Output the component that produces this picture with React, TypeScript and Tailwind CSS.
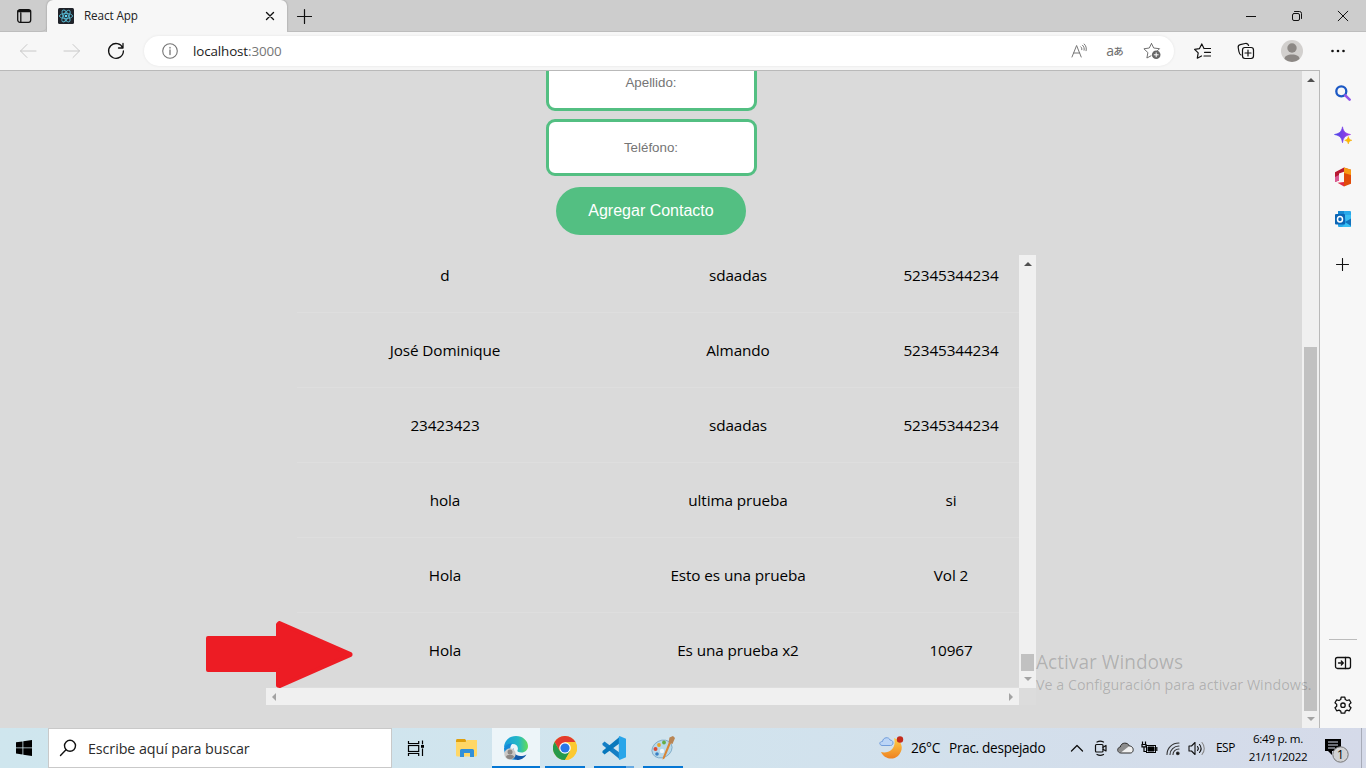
import React from "react";

type Kids = { children?: React.ReactNode };

function Line({ w = 16, sw = 1, color = "#111", children, vb }: Kids & { w?: number; sw?: number; color?: string; vb?: string }) {
  return (
    <svg width={w} height={w} viewBox={vb ?? `0 0 ${w} ${w}`} fill="none" stroke={color} strokeWidth={sw} strokeLinecap="round" strokeLinejoin="round" className="block shrink-0">
      {children}
    </svg>
  );
}

function TitleBar() {
  return (
    <div className="flex h-8 shrink-0 bg-[#cdcdcd]">
      <div className="flex w-[47px] items-center justify-center rounded-br-md border-b border-[#bdbdbd] pl-px">
        <Line sw={1.3}>
          <rect x="1.700" y="1.700" width="13" height="12.600" rx="2.200" />
          <path d="M2 3.500h12.500M2 2.700h12.500M4.800 5v9" />
        </Line>
      </div>
      <div className="flex w-60 items-center rounded-t-md bg-[#f7f7f7] pl-[11px] pr-[10px] shadow-[0_0_2px_rgba(0,0,0,0.35)]">
        <svg width="16" height="16" viewBox="0 0 16 16" className="block">
          <rect width="16" height="16" rx="1.500" fill="#20232a" />
          <g fill="none" stroke="#56b6ce" strokeWidth="0.900">
            <ellipse cx="8" cy="8" rx="6.600" ry="2.600" />
            <ellipse cx="8" cy="8" rx="6.600" ry="2.600" transform="rotate(60 8 8)" />
            <ellipse cx="8" cy="8" rx="6.600" ry="2.600" transform="rotate(120 8 8)" />
          </g>
          <circle cx="8" cy="8" r="1.300" fill="#61dafb" />
        </svg>
        <span className="ml-[10px] text-[11.7px] tracking-[-0.1px] text-[#222]">React App</span>
        <div className="ml-auto flex w-4 justify-center pl-[2px]">
          <Line w={14} sw={1.4}><path d="M3.500 3.500l7 7M10.500 3.500l-7 7" /></Line>
        </div>
      </div>
      <div className="flex flex-1 items-center border-b border-[#bdbdbd] pl-[9px]">
        <Line sw={1.2}><path d="M8.500 1.500v14M1.500 8.500h14" /></Line>
        <div className="ml-auto flex">
          <div className="flex w-[46px] justify-center"><Line w={12}><path d="M1 6.500h10" strokeLinecap="butt" /></Line></div>
          <div className="flex w-[46px] justify-center">
            <Line w={12}><rect x="1.500" y="3.500" width="7" height="7" rx="1.500" /><path d="M3.500 1.500h5a2 2 0 0 1 2 2v5" /></Line>
          </div>
          <div className="flex w-[46px] justify-center"><Line w={12}><path d="M1.200 1.200l9.600 9.600M10.800 1.200L1.200 10.800" /></Line></div>
        </div>
      </div>
    </div>
  );
}

function Toolbar() {
  return (
    <div className="flex h-[38px] shrink-0 items-center bg-[#f7f7f7] pl-[6px]">
      <div className="flex w-11 justify-center"><Line w={18} color="#c8c8c8"><path d="M17 9H1.500M8 2.500L1.500 9 8 15.500" /></Line></div>
      <div className="flex w-11 justify-center"><Line w={18} color="#c8c8c8"><path d="M1 9h15.500M10 2.500L16.500 9 10 15.500" /></Line></div>
      <div className="flex w-11 justify-center">
        <Line w={18} sw={1.3}><path d="M15.800 6A7.400 7.400 0 1 0 16.400 9M16 1.500V6h-4.500" /></Line>
      </div>
      <div className="ml-[6px] flex h-[30px] w-[1030px] items-center rounded-full bg-white pl-[18px] shadow-[0_0_3px_rgba(0,0,0,0.08)]">
        <Line color="#757575" sw={1.1}><circle cx="8" cy="8" r="7.300" /><path d="M8 7v4.500M8 4.300v.7" strokeWidth="1.300" /></Line>
        <span className="ml-[15px] pt-px text-[13.4px] tracking-[-0.12px] text-[#1b1b1b]">localhost<span className="text-[#767676]">:3000</span></span>
        <div className="ml-auto flex items-center text-[#717171]">
          <div className="flex w-9 justify-center">
            <Line color="#777"><path d="M1 14L5.600 2.500l4.600 11.500M2.600 10H8.700M9.800 3.800c.9.700 1.200 1.800 1 2.900M11.500 2.200c1.500 1.200 2 3.200 1.600 5M13.200 1c1.900 1.700 2.500 4.300 1.900 6.700" /></Line>
          </div>
          <div className="flex w-9 items-center justify-center leading-none">
            <span className="text-[14px]">a</span><span className="-ml-px font-['Noto_Sans_CJK_JP'] text-[10.5px] font-medium">あ</span>
          </div>
          <div className="flex w-[38px] justify-center">
            <Line w={18} color="#717171">
              <path d="M8.500 1.500L10.700 6l5.800.7-2 2M8.500 1.500L6.300 6 .9 6.800l4 3.800-1 5.400L8 13.800" /><circle cx="13.200" cy="12.800" r="4.300" fill="#666" stroke="none" /><path d="M13.200 10.800v4M11.200 12.800h4" stroke="#fff" />
            </Line>
          </div>
          <div className="w-[3px]" />
        </div>
      </div>
      <div className="ml-[6px] flex w-11 justify-center">
        <Line w={17} sw={1.2}><path d="M10 5.500h6.500M10 5.500L7.800.9 5.500 5.600.6 6.300l3.600 3.600-.9 5.300L7.500 13M10.500 9.300h6M10 13h6.500" /></Line>
      </div>
      <div className="flex w-11 justify-center">
        <Line w={18} sw={1.2}>
          <path d="M4 13C2.600 12.400 2.200 11 1.900 9.500L1.200 5.500C1 4 1.700 3 3.200 2.700l5-1.200C10 1.200 11.200 2 11.600 3.500" /><rect x="5.500" y="5.500" width="11" height="11" rx="2.400" /><path d="M11 8v6M8 11h6" />
        </Line>
      </div>
      <div className="flex w-[47px] justify-center">
        <svg width="22" height="22" viewBox="0 0 22 22" className="block"><circle cx="11" cy="11" r="11" fill="#d2d0ce" /><circle cx="11" cy="8" r="4.700" fill="#8c8885" /><path d="M3.500 19c0-3 3-4.600 7.500-4.600s7.500 1.600 7.500 4.600a11 11 0 0 1-15 0z" fill="#8c8885" /></svg>
      </div>
      <div className="flex w-[46px] justify-center">
        <svg width="16" height="4" className="block" fill="#111"><circle cx="2.500" cy="2" r="1.300" /><circle cx="8" cy="2" r="1.300" /><circle cx="13.500" cy="2" r="1.300" /></svg>
      </div>
    </div>
  );
}

const contacts = [
  ["d", "sdaadas", "52345344234"],
  ["José Dominique", "Almando", "52345344234"],
  ["23423423", "sdaadas", "52345344234"],
  ["hola", "ultima prueba", "si"],
  ["Hola", "Esto es una prueba", "Vol 2"],
  ["Hola", "Es una prueba x2", "10967"],
];

function Tri({ dir, color = "#a3a3a3" }: { dir: "up" | "down" | "left" | "right"; color?: string }) {
  const d = { up: "M0 6h8L4 2z", down: "M0 2h8L4 6z", left: "M6 0v8L2 4z", right: "M2 0v8l4-4z" }[dir];
  return <svg width="8" height="8" viewBox="0 0 8 8" fill={color} className="block shrink-0"><path d={d} /></svg>;
}

function ContactTable() {
  return (
    <div className="ml-[266px] mt-5 flex h-[450px] w-[770px] flex-col">
      <div className="flex h-[433px]">
        <div className="flex flex-1 flex-col justify-end overflow-hidden pl-[31px]">
          {contacts.map((c, i) => (
            <div key={i} className="grid h-[75px] shrink-0 grid-cols-[296px_290px_136px] items-center border-b border-[#dedede] text-center text-[15.3px] tracking-[-0.1px] text-black">
              {c.map((v, j) => <span key={j} className="whitespace-nowrap">{v}</span>)}
            </div>
          ))}
        </div>
        <div className="flex w-[17px] flex-col items-center bg-[#f0f0f0] pb-[5px] pt-[5px]">
          <Tri dir="up" color="#505050" />
          <div className="mb-1 mt-auto h-[17px] w-[13px] bg-[#c1c1c1]" />
          <Tri dir="down" />
        </div>
      </div>
      <div className="flex h-[17px]">
        <div className="flex w-[753px] items-center justify-between bg-[#f0f0f0] px-1"><Tri dir="left" /><Tri dir="right" /></div>
        <div className="flex-1 bg-[#dcdcdc]" />
      </div>
    </div>
  );
}

function Page() {
  return (
    <main className="relative flex flex-1 flex-col overflow-hidden border-t border-[#b9b9b9] bg-[#dadada]">
      <div className="flex w-[1302px] flex-col items-center font-['Liberation_Sans',sans-serif]">
        <div className="-mt-[17px] flex h-[57px] w-[211px] items-center justify-center rounded-[9px] border-[3px] border-[#53bf82] bg-white text-[13.333px] text-[#757575]">Apellido:</div>
        <div className="mt-2 flex h-[57px] w-[211px] items-center justify-center rounded-[9px] border-[3px] border-[#53bf82] bg-white text-[13.333px] text-[#757575]">Teléfono:</div>
        <div className="mt-[11px] flex h-12 w-[190px] items-center justify-center rounded-full bg-[#53bf82] text-[16px] text-white">Agregar Contacto</div>
      </div>
      <ContactTable />
      <svg className="absolute left-[206px] top-[550px]" width="147" height="68" viewBox="0 0 147 68">
        <path d="M2 17H72V3.500L73.500 2 144.500 33v1L74 65l-2-.5V49H2z" fill="#ed1c24" stroke="#ed1c24" strokeWidth="4" strokeLinejoin="round" />
      </svg>
    </main>
  );
}

function PageScroll() {
  return (
    <div className="flex w-[18px] flex-col items-center border-r border-t border-[#b9b9b9] bg-[#f0f0f0] pb-[5px] pt-[5px]">
      <Tri dir="up" color="#505050" />
      <div className="mb-1 mt-auto h-[364px] w-[13px] bg-[#c1c1c1]" />
      <Tri dir="down" color="#a3a3a3" />
    </div>
  );
}

function SideBar() {
  const cell = "flex h-[42px] w-full items-center justify-center";
  return (
    <aside className="flex w-[46px] flex-col items-center bg-[#f7f7f7] pt-[2px]">
      <div className={cell}>
        <svg width="16" height="16" viewBox="0 0 16 16" fill="none"><circle cx="6.300" cy="6.300" r="5" stroke="#1b58c4" strokeWidth="2.300" /><path d="M10.300 10.300l4.300 4.300" stroke="#9153e8" strokeWidth="2.600" strokeLinecap="round" /></svg>
      </div>
      <div className={cell}>
        <svg width="18" height="18" viewBox="0 0 18 18"><defs><linearGradient id="spark"><stop stopColor="#4a45e8" /><stop offset="1" stopColor="#a33be5" /></linearGradient></defs><path d="M8.500.8c1 4.800 2.500 6.500 8 7.700-5.500 1.200-7 2.900-8 8.200-1-5.300-2.500-7-8-8.200C6 7.300 7.500 5.600 8.500.8z" fill="url(#spark)" stroke="url(#spark)" strokeWidth=".7" strokeLinejoin="round" /><path d="M14.300 10.500c.6 2.400 1.200 3.200 3.600 3.800-2.400.6-3 1.400-3.600 3.700-.6-2.300-1.200-3.100-3.600-3.700 2.400-.6 3-1.400 3.600-3.800z" fill="#ffb900" stroke="#f5a900" strokeWidth=".5" /></svg>
      </div>
      <div className={cell}>
        <svg width="18" height="20" viewBox="0 0 18 20"><path d="M10 .5l7 2.300v14L10 19.500z" fill="#e04b09" /><path d="M10 .5l7 2.300V8L10 6z" fill="#f89b13" /><path d="M10 .5v4.300L5 6.500v7L1 15V5.300z" fill="#b71932" /><path d="M1 10v5l4-1.500V8z" fill="#db5a95" /><path d="M3.500 15.800L10 15v4.500z" fill="#e32b47" /></svg>
      </div>
      <div className={cell}>
        <svg width="18" height="18" viewBox="0 0 18 18"><rect x="4" y="1" width="13" height="16" rx="1" fill="#28a8ea" /><path d="M4 1h6v4H4z" fill="#1688d2" /><path d="M10 5h7v6l-4 2z" fill="#39bdf2" /><path d="M8 17h9V9l-5 4z" fill="#38c0f4" /><path d="M11 12l6 4V8.500z" fill="#1272bd" /><rect x="1" y="4" width="10" height="10.500" rx="1" fill="#0b65b5" /><ellipse cx="6" cy="9.200" rx="2.500" ry="2.800" fill="none" stroke="#fff" strokeWidth="1.500" /></svg>
      </div>
      <div className="mt-1 flex h-[42px] items-center"><Line w={14} sw={1.1}><path d="M6.500.5v12M.5 6.500h12" /></Line></div>
      <div className="mb-[2px] mt-auto h-px w-7 bg-[#bcbcbc]" />
      <div className={cell}>
        <Line w={18} sw={1.3}><rect x="1.500" y="3.500" width="15" height="11" rx="2" /><path d="M11.500 3.500v11M4.500 9h4.500M7.300 7l2 2-2 2" /></Line>
      </div>
      <div className={cell}>
        <Line w={18} sw={1.3}><path d="M7.200 1.200h3.600l.5 2.300 1.700 1 2.300-.7 1.700 3L15.300 8.400v1.800l1.700 1.600-1.700 3-2.300-.7-1.700 1-.5 2.100H7.200l-.5-2.100-1.700-1-2.300.7-1.700-3 1.700-1.600V8.400L1 6.800l1.700-3 2.300.7 1.700-1z" /><circle cx="9" cy="9.200" r="2.200" /></Line>
      </div>
      <div className="h-[2px]" />
    </aside>
  );
}

function TaskBar() {
  return (
    <footer className="flex h-10 shrink-0 bg-linear-to-r from-[#cfe6ee] via-[#d1e4ee] to-[#d5dae9] text-black">
      <div className="flex w-12 items-center justify-center">
        <svg width="16" height="16" viewBox="0 0 16 16"><path d="M0 2.300l6.500-.9v6.100H0zM7.300 1.300L16 0v7.500H7.300zM0 8.300h6.500v6.200L0 13.600zM7.300 8.300H16V16l-8.700-1.300z" /></svg>
      </div>
      <div className="flex w-[344px] items-center border border-[#c9c9c9] bg-white pl-[10px]">
        <Line w={18} sw={1.4}><circle cx="11" cy="6.800" r="5.500" /><path d="M7 10.800L1.500 16.500" /></Line>
        <span className="ml-[11px] pt-px text-[14.3px] tracking-[-0.08px] text-[#2b2b2b]">Escribe aquí para buscar</span>
      </div>
      <div className="flex w-12 items-center justify-center">
        <svg width="18" height="18" viewBox="0 0 18 18" fill="none" stroke="#000" strokeWidth="1.200"><path d="M1.500 2v2.500h10.200V2M1.500 17v-2.500h10.200V17" /><rect x="1.500" y="6.500" width="10.200" height="6" /><path d="M15.500 1.500v3.800M15.500 9.500V17" /><path d="M14 6h3v2.800h-3z" fill="#000" stroke="none" /></svg>
      </div>
      <div className="flex w-[52px] items-center justify-center pl-[2px]">
        <svg width="22" height="20" viewBox="0 0 22 20"><path d="M0 2.500Q0 1 1 1h8l1.500 2V6H0z" fill="#e0a00d" /><path d="M0 4h9.500l1.500-2h10v15q0 1.500-1.500 1.500h-18Q0 18.500 0 17z" fill="#ffd766" /><path d="M4 19v-6.500q0-1.500 1.500-1.500h11q1.500 0 1.500 1.500V19h-4v-4H8v4z" fill="#3190d9" /></svg>
      </div>
      <div className="flex w-12 flex-col items-center justify-between bg-[#edf5f9] pt-2">
        <svg width="24" height="24" viewBox="0 0 24 24"><defs><linearGradient id="eg"><stop stopColor="#199ddd" /><stop offset=".6" stopColor="#24b9c4" /><stop offset="1" stopColor="#63dd55" /></linearGradient></defs><path d="M0 12C0 5 5 0 12 0s12 5 12 10c0 4-3 6.500-6.500 6.500-3 0-4.500-1-4-2.200 1.300-3-.5-6.300-5-6.300C4 8 1 10 0 12z" fill="url(#eg)" /><path d="M0 12c2-4 5-5 8.500-4.500C5 10 5 20 12.500 23.500 5 25 0 19 0 12z" fill="#1389d8" /><path d="M9.500 12c-1 4 2 8 7 8 2.500 0 4-.7 6-1.600C20.500 22 16.500 24 13 24c-5-1-7-8-3.500-12z" fill="#135aaa" /><circle cx="6" cy="18" r="5.700" fill="#cbc9c7" /><circle cx="6" cy="16" r="2.500" fill="#8b8784" /><path d="M2 21c0-3 8-3 8 0-2 3-6 3-8 0z" fill="#8b8784" /></svg>
        <div className="h-[2px] w-12 bg-[#0577d4]" />
      </div>
      <div className="flex w-[50px] flex-col items-center justify-between pt-2">
        <svg width="24" height="24" viewBox="0 0 24 24"><circle cx="12" cy="12" r="12" fill="#fcc931" /><path d="M1.600 6A12 12 0 0 1 22.400 6H12L6.800 15z" fill="#e33b2e" /><path d="M1.600 6A12 12 0 0 0 12 24l5.200-9H6.800z" fill="#269a4b" /><path d="M22.400 6A12 12 0 0 1 12 24l5.200-9L14 6z" fill="#fcc931" /><circle cx="12" cy="12" r="5.800" fill="#fff" /><circle cx="12" cy="12" r="4.600" fill="#2877e8" /></svg>
        <div className="h-[2px] w-10 bg-[#0577d4]" />
      </div>
      <div className="flex w-12 flex-col items-center justify-between pt-2">
        <svg width="24" height="24" viewBox="0 0 24 24"><path d="M.5 7.500l2-2L18 17v6.500L.5 9z" fill="#147fc5" /><path d="M18 .5V7L2.500 18.500l-2-2V15z" fill="#0878bc" /><path d="M17.500 0L24 2.800v18.400L17.500 24l-.7-1V1z" fill="#29a5e9" /></svg>
        <div className="flex h-[2px] w-10 bg-[#0577d4]"><div className="ml-auto w-2 bg-[#65a9e2]" /></div>
      </div>
      <div className="flex w-[50px] flex-col items-center justify-between pt-2">
        <svg width="24" height="24" viewBox="0 0 24 24"><ellipse cx="11" cy="13" rx="10.500" ry="8.500" transform="rotate(-28 11 13)" fill="#b7d9eb" stroke="#7aa6c3" strokeWidth=".8" /><circle cx="4.500" cy="13" r="2" fill="#d94a35" /><circle cx="8" cy="9" r="1.900" fill="#e6a52d" /><circle cx="13" cy="6.500" r="1.900" fill="#65ad45" /><circle cx="11" cy="15" r="2.200" fill="#edf6fb" /><circle cx="6" cy="18" r="1.800" fill="#397fc2" /><path d="M20 7l-6.500 15.500-2 1 .5-2.500L18 6z" fill="#d98535" /><path d="M17.500 6.500l1-5L22 0l2 2-2.500 6z" fill="#b98554" /></svg>
        <div className="h-[2px] w-10 bg-[#0577d4]" />
      </div>
      <div className="ml-auto flex items-center text-[14px]">
        <svg width="25" height="24" viewBox="0 0 25 24"><defs><linearGradient id="moon" x2="0" y2="1"><stop stopColor="#ffd04a" /><stop offset="1" stopColor="#ee8120" /></linearGradient></defs><path d="M15 2c9 3 10 12 4 18-5 4.500-14 3-17-4 8 2 16-4 13-14z" fill="url(#moon)" /><path d="M3 9.500c-3-.5-3-4 .5-4C4 1 10 .5 11 4c4 0 4 5.500.5 5.500z" fill="#bbd5f6" stroke="#719ddb" /><circle cx="21" cy="3.500" r="3.200" fill="#c42b1c" /></svg>
        <span className="ml-[7px] w-[38px] whitespace-nowrap text-[13.8px] tracking-[-0.35px]">26°C</span>
        <span className="w-[116px] whitespace-nowrap text-[13.6px] tracking-[-0.3px]">Prac. despejado</span>
        <div className="flex w-6 justify-center"><Line w={14} sw={1.3}><path d="M1.500 10L7 4.500l5.500 5.500" /></Line></div>
        <div className="flex w-6 justify-center"><Line w={16} sw={1.2}><rect x="2.500" y="4.500" width="7.500" height="7.500" rx="1" /><path d="M10 7.300L13 5.500v5.500l-3-1.700M4 2c2-1 4.500-1 6.500 0M4 14.500c2 1 4.500 1 6.500 0" /></Line></div>
        <div className="flex w-6 justify-center"><svg width="17" height="12" viewBox="0 0 17 12"><path d="M4 11C0 11-.5 5.500 3.300 5 4 0 11 0 12.300 4c5 0 5 7 1 7z" fill="#f0f0f0" /><path d="M3.300 5C4 0 11 0 12.300 4L4 10.500C.5 10 0 6 3.300 5z" fill="#8d8d8d" /><path d="M4 11C0 11-.5 5.500 3.300 5 4 0 11 0 12.300 4c5 0 5 7 1 7z" fill="none" stroke="#2b2b2b" /></svg></div>
        <div className="flex w-6 justify-center"><svg width="17" height="14" viewBox="0 0 17 14" fill="none" stroke="#000"><rect x="5.500" y="4.500" width="9" height="7" /><path d="M7 6h6v4H7z" fill="#000" /><path d="M15.800 6v4M1.500.5V3M4.500.5V3M1 3.500h4v2.300H1zM3 6v4.500h2.500" strokeWidth="1.200" /></svg></div>
        <div className="flex w-[24px] justify-center"><Line w={15} sw={1.1} color="#333"><path d="M1 13.500C1 7 6 2 13 2M4 13.500C4 9 8 5 13 5M7 13.500C7 10.500 9.500 8 13 8" /><circle cx="11.800" cy="12.300" r="1.300" fill="#000" /></Line></div>
        <div className="flex w-[22px] justify-center"><Line w={17} sw={1.1}><path d="M1 6h2.500L7 2.500v12L3.500 11H1zM9.500 6.500c1 1.200 1 2.800 0 4M11.500 4.500c2 2.500 2 5.500 0 8" /><path d="M14 2.500c3 3.500 3 8.500 0 12" stroke="#888" /></Line></div>
        <span className="ml-[9px] w-[29px] whitespace-nowrap text-[11.9px] tracking-[-0.5px]">ESP</span>
        <div className="flex w-[66px] flex-col items-center whitespace-nowrap text-[11.6px] leading-[18px] tracking-[-0.28px]"><span>6:49 p. m.</span><span>21/11/2022</span></div>
        <div className="flex w-[50px] justify-center pl-[2px] pt-[3px]">
          <svg width="24" height="26" viewBox="0 0 24 26"><path d="M0 2h16v12H7v4l-4-4H0z" fill="#000" /><path d="M3 5h10M3 8h10M3 11h7" stroke="#d5dae9" /><circle cx="15.500" cy="17.500" r="7.700" fill="#d1d2d4" stroke="#777" strokeWidth="1" /><text x="15.500" y="22" fontSize="12" textAnchor="middle">1</text></svg>
        </div>
        <div className="h-10 w-[5px] border-l border-[#a7abb8]" />
      </div>
    </footer>
  );
}

export default function App() {
  return (
    <div className="relative flex h-[768px] w-[1366px] flex-col overflow-hidden font-['Open_Sans','Noto_Sans',sans-serif]">
      <TitleBar />
      <Toolbar />
      <div className="flex min-h-0 flex-1 bg-[#f7f7f7]">
        <Page />
        <PageScroll />
        <SideBar />
      </div>
      <TaskBar />
      <div className="pointer-events-none absolute left-[1036px] top-[649px] whitespace-nowrap text-[#000]/20">
        <div className="text-[19.1px] leading-[26px]">Activar Windows</div>
        <div className="text-[14.3px] leading-5">Ve a Configuración para activar Windows.</div>
      </div>
    </div>
  );
}
